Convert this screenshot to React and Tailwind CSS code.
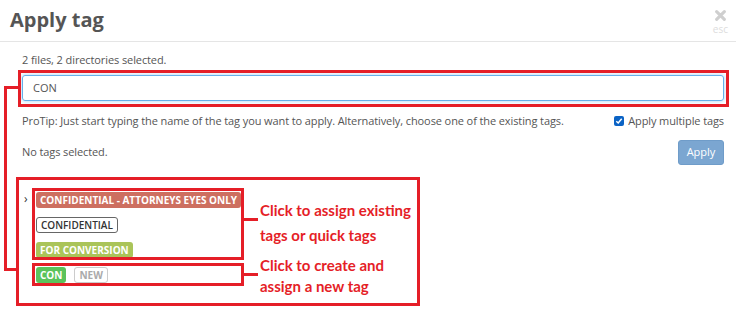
import React from 'react';

const Tag = ({ children, className }) => (
  <span className={`inline-flex items-center h-[16px] px-[4px] rounded-[3px] text-[10px] font-bold leading-none ${className}`}>
    {children}
  </span>
);

const App = () => {
  return (
    <div className="relative w-[750px] h-[336px] bg-white overflow-hidden text-[#555] font-['Open_Sans',sans-serif]">
      {/* header */}
      <div className="flex items-start justify-between pl-[10px] pr-[8px] pt-[5px] h-[42px] w-[736px] border-b border-[#e5e5e5]">
        <h2 className="text-[20px] font-bold leading-[30px] text-[#555]">Apply tag</h2>
        <div className="flex flex-col items-center pt-[5px]">
          <svg width="11" height="11" viewBox="0 0 10 10">
            <path d="M1.5 1.5 L8.5 8.5 M8.5 1.5 L1.5 8.5" stroke="#cfcfcf" strokeWidth="2.8" strokeLinecap="round" />
          </svg>
          <span className="text-[10px] leading-[12px] mt-[2px] text-[#ddd]">esc</span>
        </div>
      </div>

      {/* body */}
      <div className="pl-[22px] pr-[26px]">
        <p className="text-[11px] leading-[14px] mt-[11px] tracking-[-0.1px]">2 files, 2 directories selected.</p>
        <div className="mt-[8px] h-[26px] flex items-center px-[10px] border border-[#66afe9] rounded-[3px] shadow-[0_0_4px_rgba(102,175,233,0.6)] text-[11px] text-[#555]">
          CON
        </div>
        <div className="flex items-center justify-between mt-[13px] text-[11px] leading-[14px] tracking-[-0.1px]">
          <span>ProTip: Just start typing the name of the tag you want to apply. Alternatively, choose one of the existing tags.</span>
          <label className="flex items-center gap-[4px]">
            <span className="w-[10px] h-[10px] rounded-[2px] bg-[#0b63c5] flex items-center justify-center">
              <svg width="8" height="8" viewBox="0 0 8 8">
                <path d="M1.3 4.2 L3.2 6 L6.7 1.8" fill="none" stroke="#fff" strokeWidth="1.5" />
              </svg>
            </span>
            Apply multiple tags
          </label>
        </div>
        <div className="flex items-center justify-between mt-[12px]">
          <span className="text-[11px] tracking-[-0.1px]">No tags selected.</span>
          <button className="w-[46px] h-[25px] rounded-[3px] bg-[#7ba6d1] border border-[#6f9cc9] text-white text-[11px]">
            Apply
          </button>
        </div>

        <div className="flex mt-[27px]">
          <span className="text-[12px] leading-[14px] w-[14px] pl-[2px] text-[#333]">›</span>
          <div className="flex flex-col items-start gap-[9px]">
            <Tag className="bg-[#cd6f60] text-white">CONFIDENTIAL - ATTORNEYS EYES ONLY</Tag>
            <Tag className="bg-white border border-[#666] text-[#333] font-semibold">CONFIDENTIAL</Tag>
            <Tag className="bg-[#aac459] text-white">FOR CONVERSION</Tag>
            <div className="flex gap-[8px]">
              <Tag className="bg-[#5bc35b] text-white">CON</Tag>
              <Tag className="bg-white border border-[#ccc] text-[#aaa]">NEW</Tag>
            </div>
          </div>
        </div>
      </div>

      {/* annotation overlay */}
      <div className="absolute left-[18px] top-[70px] w-[711px] h-[37px] border-[3px] border-[#e51e27]" />
      <div className="absolute left-[4px] top-[86px] w-[15px] h-[185px] border-l-[3px] border-t-[3px] border-b-[3px] border-[#e51e27]" />
      <div className="absolute left-[16px] top-[177px] w-[404px] h-[129px] border-[3px] border-[#e51e27]" />
      <div className="absolute left-[32px] top-[188px] w-[212px] h-[72px] border-[3px] border-[#e51e27]" />
      <div className="absolute left-[32px] top-[263px] w-[212px] h-[23px] border-[3px] border-[#e51e27]" />
      <div className="absolute left-[243px] top-[218px] w-[15px] h-[3px] bg-[#e51e27]" />
      <div className="absolute left-[243px] top-[273px] w-[15px] h-[3px] bg-[#e51e27]" />
      <div className="absolute left-[260px] top-[198px] text-[15px] font-bold leading-[25px] text-[#e51e27] font-['Lato',sans-serif]">
        Click to assign existing<br />tags or quick tags
      </div>
      <div className="absolute left-[260px] top-[255px] text-[15px] font-bold leading-[21px] text-[#e51e27] font-['Lato',sans-serif]">
        Click to create and<br />assign a new tag
      </div>
    </div>
  );
};

export default App;
